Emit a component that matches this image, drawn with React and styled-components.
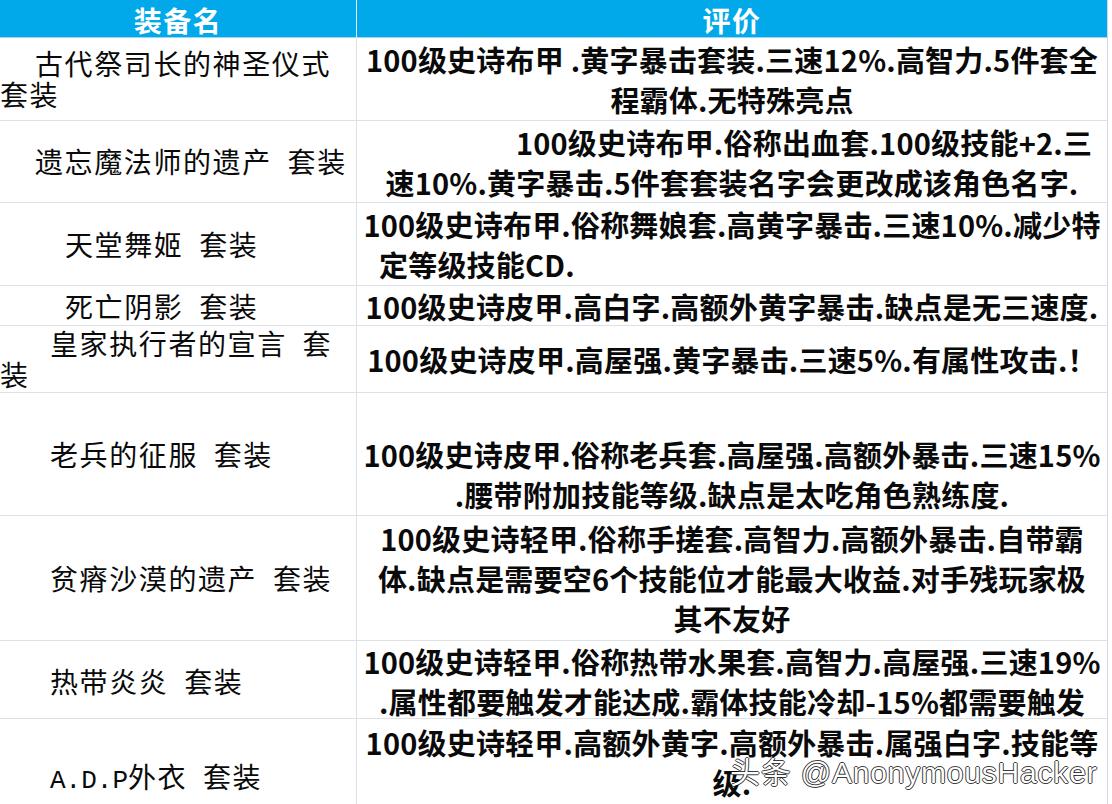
import styled, { createGlobalStyle } from 'styled-components';

const GlobalStyle = createGlobalStyle`
  html, body {
    margin: 0;
    padding: 0;
    background: #fff;
    overflow: hidden;
  }
  body {
    font-family: "Noto Sans CJK SC", "Noto Sans", sans-serif;
    color: #0a0a0a;
  }
`;

const Sheet = styled.div`
  position: relative;
  width: 1108px;
  height: 804px;
  overflow: hidden;
  border-right: 1px solid #cfd8e4;
  box-sizing: border-box;
`;

const Row = styled.div`
  display: grid;
  grid-template-columns: 357px 1fr;
  height: ${p => p.$h}px;
  border-bottom: 1px solid #dde0e5;
  box-sizing: border-box;
`;

const HeadRow = styled(Row)`
  background: #01a9ea;
  border-bottom: 1px solid #9fd3ee;
`;

const HeadCell = styled.div`
  display: flex;
  align-items: center;
  justify-content: center;
  color: #fff;
  font-size: 28px;
  font-weight: 700;
  letter-spacing: 1.5px;
  border-right: ${p => (p.$last ? 'none' : '1px solid #e8f4fb')};
`;

const NameCell = styled.div`
  display: flex;
  flex-direction: column;
  justify-content: ${p => (p.$valign === 'end' ? 'flex-end' : 'center')};
  padding-bottom: ${p => (p.$valign === 'end' ? '7px' : '0')};
  border-right: 1px solid #dde0e5;
  box-sizing: border-box;
`;

const NameLine = styled.div`
  padding-left: ${p => p.$indent}px;
  font-size: 28px;
  font-weight: 400;
  letter-spacing: 1.6px;
  line-height: 31px;
  white-space: pre;
`;

const Mono = styled.span`
  font-family: "Liberation Mono", monospace;
  font-size: 26px;
  letter-spacing: 0;
`;

const DescCell = styled.div`
  display: flex;
  flex-direction: column;
  justify-content: ${p => (p.$valign === 'end' ? 'flex-end' : 'center')};
  padding-bottom: ${p => (p.$valign === 'end' ? '1px' : '0')};
  min-width: 0;
`;

const DescLine = styled.div`
  text-align: ${p => p.$align || 'center'};
  padding-left: ${p => p.$indent || 0}px;
  font-size: 29px;
  font-weight: 700;
  letter-spacing: 0.2px;
  line-height: 40px;
  white-space: pre;
`;

const Watermark = styled.div`
  position: absolute;
  left: 730px;
  top: 748px;
  font-family: "Liberation Sans", "Noto Sans CJK SC", sans-serif;
  font-size: 30px;
  font-weight: 400;
  color: #fff;
  letter-spacing: 0.8px;
  text-shadow:
    1px 0 0 rgba(0, 0, 0, 0.75),
    -1px 0 0 rgba(0, 0, 0, 0.75),
    0 1px 0 rgba(0, 0, 0, 0.75),
    0 -1px 0 rgba(0, 0, 0, 0.75);
  white-space: pre;
  pointer-events: none;
`;

const rows = [
  {
    h: 83,
    name: [{ t: '古代祭司长的神圣仪式', i: 35 }, { t: '套装', i: 0 }],
    desc: [
      { t: '100级史诗布甲 .黄字暴击套装.三速12%.高智力.5件套全' },
      { t: '程霸体.无特殊亮点' },
    ],
  },
  {
    h: 82,
    name: [{ t: '遗忘魔法师的遗产  套装', i: 35 }],
    desc: [
      { t: '100级史诗布甲.俗称出血套.100级技能+2.三', indent: 144 },
      { t: '速10%.黄字暴击.5件套套装名字会更改成该角色名字.' },
    ],
  },
  {
    h: 83,
    name: [{ t: '天堂舞姬  套装', i: 65 }],
    desc: [
      { t: '100级史诗布甲.俗称舞娘套.高黄字暴击.三速10%.减少特' },
      { t: '定等级技能CD.', align: 'left', indent: 22 },
    ],
  },
  {
    h: 40,
    name: [{ t: '死亡阴影  套装', i: 65 }],
    desc: [{ t: '100级史诗皮甲.高白字.高额外黄字暴击.缺点是无三速度.' }],
  },
  {
    h: 67,
    name: [{ t: '皇家执行者的宣言  套', i: 50 }, { t: '装', i: 0 }],
    desc: [{ t: '100级史诗皮甲.高屋强.黄字暴击.三速5%.有属性攻击.！' }],
  },
  {
    h: 123,
    descAlign: 'end',
    name: [{ t: '老兵的征服  套装', i: 50 }],
    desc: [
      { t: '100级史诗皮甲.俗称老兵套.高屋强.高额外暴击.三速15%' },
      { t: '.腰带附加技能等级.缺点是太吃角色熟练度.' },
    ],
  },
  {
    h: 125,
    name: [{ t: '贫瘠沙漠的遗产  套装', i: 50 }],
    desc: [
      { t: '100级史诗轻甲.俗称手搓套.高智力.高额外暴击.自带霸' },
      { t: '体.缺点是需要空6个技能位才能最大收益.对手残玩家极' },
      { t: '其不友好' },
    ],
  },
  {
    h: 78,
    name: [{ t: '热带炎炎  套装', i: 50 }],
    desc: [
      { t: '100级史诗轻甲.俗称热带水果套.高智力.高屋强.三速19%' },
      { t: '.属性都要触发才能达成.霸体技能冷却-15%都需要触发' },
    ],
  },
  {
    h: 86,
    nameAlign: 'end',
    name: [{ t: '外衣  套装', i: 50, mono: 'A.D.P' }],
    desc: [
      { t: '100级史诗轻甲.高额外黄字.高额外暴击.属强白字.技能等' },
      { t: '级.' },
    ],
  },
];

export default function App() {
  return (
    <>
      <GlobalStyle />
      <Sheet>
        <HeadRow $h={38}>
          <HeadCell>装备名</HeadCell>
          <HeadCell $last>评价</HeadCell>
        </HeadRow>
        {rows.map((row, idx) => (
          <Row key={idx} $h={row.h}>
            <NameCell $valign={row.nameAlign}>
              {row.name.map((line, j) => (
                <NameLine key={j} $indent={line.i}>
                  {line.mono && <Mono>{line.mono}</Mono>}
                  {line.t}
                </NameLine>
              ))}
            </NameCell>
            <DescCell $valign={row.descAlign}>
              {row.desc.map((line, j) => (
                <DescLine key={j} $align={line.align} $indent={line.indent}>
                  {line.t}
                </DescLine>
              ))}
            </DescCell>
          </Row>
        ))}
        <Watermark>头条 @AnonymousHacker</Watermark>
      </Sheet>
    </>
  );
}
